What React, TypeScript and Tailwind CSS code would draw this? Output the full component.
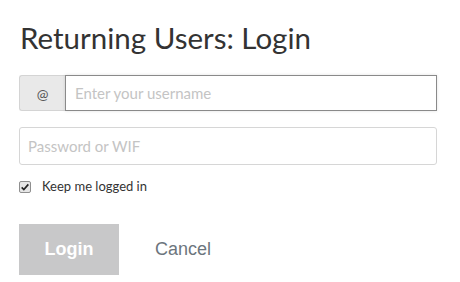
import { useState } from "react"

export default function App() {
  const [keep, setKeep] = useState(true)

  return (
    <div className="min-h-screen bg-white px-[19px] pt-[18px] font-['Lato','Open_Sans',sans-serif]">
      <h1 className="text-[29.5px] leading-[40px] text-[#333] pl-px">Returning Users: Login</h1>

      <div className="mt-[17px] w-[418px]">
        <div className="flex h-[36px]">
          <span className="flex w-[46px] items-center justify-center rounded-l-[3px] border border-r-0 border-[#d4d4d4] bg-[#e9e9e9] text-[14px] text-[#555]">
            @
          </span>
          <input
            autoFocus
            placeholder="Enter your username"
            className="flex-1 border border-[#8a8a8a] bg-white px-[9px] text-[15px] text-[#333] placeholder:text-[#c4c4c4] outline-none shadow-[0_0_3px_rgba(0,0,0,0.12)]"
          />
        </div>

        <input
          type="password"
          placeholder="Password or WIF"
          className="mt-[16px] block h-[38px] w-full rounded-[3px] border border-[#d6d6d6] bg-white px-[8px] text-[15px] text-[#333] placeholder:text-[#c4c4c4] outline-none"
        />

        <label className="mt-[12px] flex items-center gap-[11px] text-[13px] text-[#333] cursor-pointer">
          <span
            onClick={() => setKeep(!keep)}
            className="flex h-[12px] w-[12px] items-center justify-center rounded-[2px] border border-[#8f8f8f] bg-[#e6e6e6]"
          >
            {keep && (
              <svg viewBox="0 0 12 12" className="h-[10px] w-[10px]">
                <path d="M2 6.5 L4.6 9 L10 2.8" fill="none" stroke="#222" strokeWidth="2" />
              </svg>
            )}
          </span>
          Keep me logged in
        </label>

        <div className="mt-[27px] flex items-center">
          <button className="h-[51px] w-[100px] bg-[#c8c8c9] font-['Liberation_Sans',Arial,sans-serif] text-[18px] font-bold text-white">
            Login
          </button>
          <button className="ml-[36px] font-['Liberation_Sans',Arial,sans-serif] text-[18px] text-[#6c757d]">
            Cancel
          </button>
        </div>
      </div>
    </div>
  )
}
